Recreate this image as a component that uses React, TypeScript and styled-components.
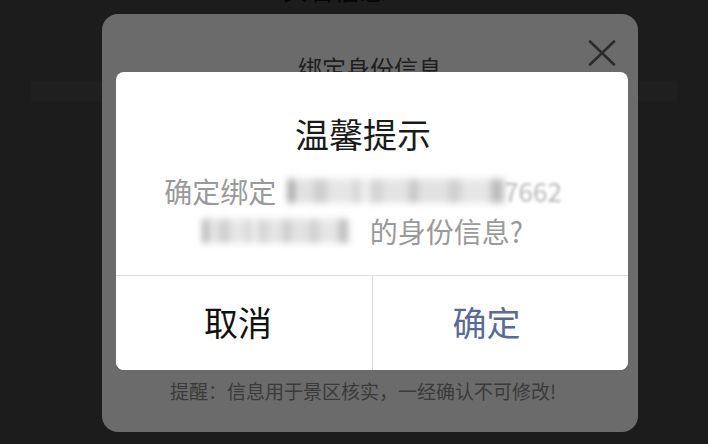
import React from "react";
import styled, { createGlobalStyle } from "styled-components";

const GlobalStyle = createGlobalStyle`
  html, body { margin: 0; padding: 0; background: #1c1c1c; }
  body { font-family: "Noto Sans CJK SC", "Noto Sans", sans-serif; }
  * { box-sizing: border-box; }
`;

const Page = styled.div`
  position: relative;
  width: 708px;
  height: 444px;
  overflow: hidden;
  background: #1c1c1c;
  display: flex;
  flex-direction: column;
  align-items: center;
`;

const PageHeading = styled.div`
  margin-top: -25px;
  font-size: 26px;
  line-height: 28px;
  color: #050505;
  padding-right: 40px;
`;

const PageRow = styled.div`
  margin-top: 78px;
  width: 646px;
  height: 20px;
  background: #1f1f1f;
`;

const Sheet = styled.div`
  position: absolute;
  left: 102px;
  top: 14px;
  width: 536px;
  height: 418px;
  border-radius: 16px;
  background: #6b6b6b;
  display: flex;
  flex-direction: column;
  align-items: center;
`;

const SheetTitle = styled.div`
  margin-top: 39px;
  font-size: 24px;
  line-height: 30px;
  color: #1e1e1e;
`;

const CloseButton = styled.button`
  position: absolute;
  top: 26px;
  right: 22px;
  width: 28px;
  height: 26px;
  padding: 0;
  border: 0;
  background: none;
  display: flex;
`;

const SheetNote = styled.div`
  margin-top: auto;
  padding: 0 14px 29px 0;
  font-size: 19px;
  line-height: 24px;
  color: #3a3a3a;
`;

const Dialog = styled.div`
  position: absolute;
  left: 14px;
  top: 58px;
  width: 512px;
  height: 298px;
  border-radius: 8px;
  background: #ffffff;
  display: flex;
  flex-direction: column;
  overflow: hidden;
`;

const DialogBody = styled.div`
  flex: 1;
  padding: 42px 18px 0 0;
  display: flex;
  flex-direction: column;
  align-items: center;
`;

const DialogTitle = styled.div`
  font-size: 34px;
  line-height: 40px;
  color: #1a1a1a;
`;

const Message = styled.div`
  margin-top: 17px;
  font-size: 28px;
  line-height: 40px;
  color: #9a9a9a;
  text-align: center;
`;

const Line = styled.div`
  display: flex;
  align-items: center;
  justify-content: center;
  height: 40px;
  white-space: nowrap;
`;

const Redacted = styled.span<{ $w: number; $gap?: number }>`
  display: inline-block;
  width: ${(p) => p.$w}px;
  height: 24px;
  margin-left: ${(p) => p.$gap ?? 0}px;
  filter: blur(3.5px);
  background: linear-gradient(
    90deg,
    #9a9a9a 0 3%,
    #e2e2e2 3% 12%,
    #cdcdcd 12% 18%,
    #e6e6e6 18% 30%,
    #d6d6d6 30% 34%,
    #f2f2f2 34% 38%,
    #d4d4d4 38% 44%,
    #e4e4e4 44% 56%,
    #c6c6c6 56% 60%,
    #e2e2e2 60% 74%,
    #d0d0d0 74% 80%,
    #e6e6e6 80% 94%,
    #bcbcbc 94% 100%
  );
`;

const BlurText = styled.span`
  display: inline-block;
  filter: blur(1.4px);
  color: #b8b8b8;
  font-size: 26px;
`;

const Actions = styled.div`
  height: 95px;
  border-top: 1px solid #dedede;
  display: grid;
  grid-template-columns: 1fr 1fr;
`;

const Action = styled.button<{ $primary?: boolean }>`
  border: 0;
  background: #fff;
  padding: 0 ${(p) => (p.$primary ? 28 : 12)}px 4px 0;
  font-family: inherit;
  font-size: 34px;
  color: ${(p) => (p.$primary ? "#5a6a96" : "#111111")};
  & + & {
    border-left: 1px solid #dcdcdc;
  }
`;

export default function App() {
  return (
    <>
      <GlobalStyle />
      <Page>
        <PageHeading>实名信息</PageHeading>
        <PageRow />
        <Sheet>
          <SheetTitle>绑定身份信息</SheetTitle>
          <CloseButton aria-label="关闭">
            <svg width="28" height="26" viewBox="0 0 28 26">
              <path d="M2 1.5 L26 24.5 M26 1.5 L2 24.5" stroke="#2b2b2b" strokeWidth="2.6" strokeLinecap="round" />
            </svg>
          </CloseButton>
          <Dialog>
            <DialogBody>
              <DialogTitle>温馨提示</DialogTitle>
              <Message>
                <Line>
                  确定绑定
                  <Redacted $w={216} $gap={12} />
                  <BlurText>7662</BlurText>
                </Line>
                <Line>
                  <Redacted $w={145} />
                  <span style={{ marginLeft: 22 }}>的身份信息?</span>
                </Line>
              </Message>
            </DialogBody>
            <Actions>
              <Action>取消</Action>
              <Action $primary>确定</Action>
            </Actions>
          </Dialog>
          <SheetNote>提醒：信息用于景区核实，一经确认不可修改!</SheetNote>
        </Sheet>
      </Page>
    </>
  );
}
